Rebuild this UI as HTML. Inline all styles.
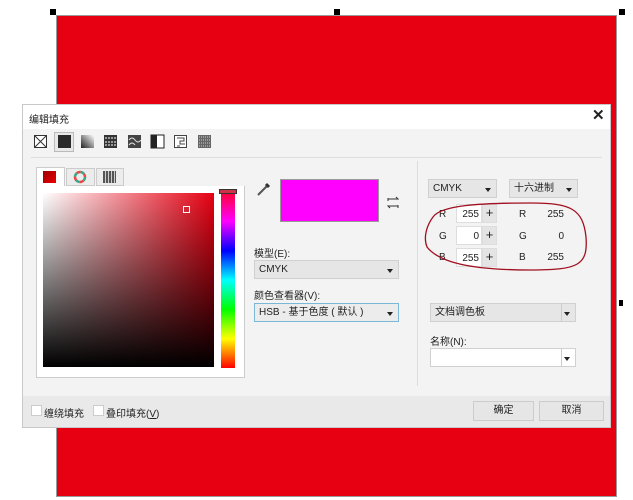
<!DOCTYPE html>
<html><head><meta charset="utf-8"><style>
*{box-sizing:border-box;margin:0;padding:0}
body{width:633px;height:500px;background:#fff;position:relative;overflow:hidden;font-family:"Liberation Sans","Noto Sans CJK SC",sans-serif;font-size:10px;color:#222}
.a{position:absolute}
.h{width:6px;height:6px;background:#000}
.sel{background:#e6e6e6;border:1px solid #d0d0d0;font-size:10px;padding:3px 4px;line-height:11px}
.sel:after{content:"";position:absolute;right:5px;top:8px;border:3px solid transparent;border-top:4px solid #222}
.ic{width:14px;height:14px}
.lbl{font-size:10px}
</style></head><body>
<div class="a" style="left:56px;top:15px;width:561px;height:482px;background:#e60012;border:1px solid #999"></div>
<div class="a h" style="left:50px;top:9px"></div>
<div class="a h" style="left:334px;top:9px"></div>
<div class="a h" style="left:619px;top:9px"></div>
<div class="a h" style="left:619px;top:300px;width:4px"></div>

<div class="a" style="left:22px;top:104px;width:589px;height:324px;background:#f3f3f3;border:1px solid #c8c8c8">
 <div class="a" style="left:0;top:0;width:587px;height:24px;background:#fff"></div>
 <div class="a" style="left:6px;top:6px;font-size:10px">编辑填充</div>
 <div class="a" style="left:569px;top:1px;font-size:15px;font-weight:bold">✕</div>
 <!-- toolbar -->
 <div class="a" style="left:31px;top:27px;width:20px;height:20px;border:1px solid #bbb;background:#e8e8e8"></div>
 <svg class="a" style="left:10px;top:29px" width="190" height="16">
  <rect x="1.5" y="1.5" width="12" height="12" fill="#fff" stroke="#333"/><path d="M1.5 1.5L13.5 13.5M13.5 1.5L1.5 13.5" stroke="#333"/>
  <rect x="25" y="1" width="13" height="13" fill="#2a2a2a"/>
  <defs><linearGradient id="g" x1="0" y1="1" x2="1" y2="0"><stop offset="0" stop-color="#222"/><stop offset="1" stop-color="#fff"/></linearGradient></defs>
  <rect x="48" y="1" width="13" height="13" fill="url(#g)"/>
  <rect x="71" y="1" width="13" height="13" fill="#333"/><path d="M72 4h11M72 8h11M72 11h11" stroke="#fff" stroke-dasharray="2 1"/>
  <rect x="95" y="1" width="13" height="13" fill="#444"/><path d="M96 6q3-4 6 0t6 0M96 11q3-4 6 0" stroke="#ddd" fill="none"/>
  <rect x="118" y="1" width="13" height="13" fill="#fff" stroke="#222"/><rect x="118" y="1" width="6" height="13" fill="#222"/>
  <rect x="141.5" y="1.5" width="12" height="12" fill="#fff" stroke="#444"/><path d="M144 4h7v3h-4v3h5M144 12h3" stroke="#444" fill="none"/>
  <rect x="165" y="1" width="13" height="13" fill="#666"/><path d="M166 3h11M166 6h11M166 9h11M166 12h11" stroke="#ccc" stroke-dasharray="1 1"/>
 </svg>
 <div class="a" style="left:8px;top:52px;width:571px;height:1px;background:#ddd"></div>
 <!-- tabs -->
 <div class="a" style="left:13px;top:62px;width:29px;height:20px;background:#fff;border:1px solid #ccc;border-bottom:none"></div>
 <div class="a" style="left:20px;top:66px;width:13px;height:12px;background:linear-gradient(135deg,#900,#e00)"></div>
 <div class="a" style="left:43px;top:63px;width:29px;height:18px;background:#ececec;border:1px solid #ccc"></div>
 <svg class="a" style="left:50px;top:65px" width="14" height="14"><circle cx="7" cy="7" r="5" fill="none" stroke="#3a8" stroke-width="2.5" stroke-dasharray="4 4"/><circle cx="7" cy="7" r="5" fill="none" stroke="#e44" stroke-width="2.5" stroke-dasharray="4 4" stroke-dashoffset="4"/></svg>
 <div class="a" style="left:73px;top:63px;width:28px;height:18px;background:#ececec;border:1px solid #ccc"></div>
 <div class="a" style="left:80px;top:66px;width:13px;height:12px;background:repeating-linear-gradient(90deg,#555 0 2px,#ccc 2px 3px),#555"></div>
 <div class="a" style="left:13px;top:81px;width:209px;height:192px;background:#fff;border:1px solid #ccc;border-top:none"></div>
 <div class="a" style="left:20px;top:88px;width:171px;height:174px;background:linear-gradient(to bottom,rgba(0,0,0,0),#000),linear-gradient(to right,#fff,#e60012)"></div>
 <div class="a" style="left:160px;top:101px;width:7px;height:7px;border:1px solid #fff"></div>
 <div class="a" style="left:198px;top:87px;width:14px;height:176px;background:linear-gradient(to bottom,#f03,#f0f,#00f,#0ff,#0f0,#ff0,#f00)"></div>
 <div class="a" style="left:196px;top:84px;width:18px;height:5px;border:1px solid #333;background:#c34"></div>
 <!-- middle -->
 <svg class="a" style="left:233px;top:76px" width="16" height="16"><path d="M2 14L11 5" stroke="#555" stroke-width="2"/><path d="M10 3l3 3" stroke="#333" stroke-width="3"/></svg>
 <div class="a" style="left:257px;top:74px;width:99px;height:43px;background:#f0f;border:1px solid #999"></div>
 <svg class="a" style="left:363px;top:90px" width="14" height="16"><path d="M2 4h10l-2-2M12 11H2l2 2M2 3v3M12 10v3" stroke="#333" fill="none"/></svg>
 <div class="a lbl" style="left:231px;top:140px">模型(E):</div>
 <div class="a sel" style="left:231px;top:155px;width:145px;height:19px">CMYK</div>
 <div class="a lbl" style="left:231px;top:182px">颜色查看器(V):</div>
 <div class="a sel" style="left:231px;top:198px;width:145px;height:19px;border-color:#7ab8d8;background:#ececec">HSB - 基于色度 ( 默认 )</div>
 <div class="a" style="left:394px;top:56px;width:1px;height:225px;background:#ddd"></div>
 <!-- right -->
 <div class="a sel" style="left:405px;top:74px;width:69px;height:19px">CMYK</div>
 <div class="a sel" style="left:486px;top:74px;width:69px;height:19px">十六进制</div>
 <div class="a lbl" style="left:416px;top:104px">R</div><div class="a lbl" style="left:416px;top:126px">G</div><div class="a lbl" style="left:416px;top:147px">B</div>
 <div class="a" style="left:433px;top:99px;width:26px;height:19px;background:#fff;border:1px solid #ddd;text-align:right;padding:4px 2px 0 0">255</div>
 <div class="a" style="left:433px;top:121px;width:26px;height:19px;background:#fff;border:1px solid #ddd;text-align:right;padding:4px 2px 0 0">0</div>
 <div class="a" style="left:433px;top:143px;width:26px;height:19px;background:#fff;border:1px solid #ddd;text-align:right;padding:4px 2px 0 0">255</div>
 <div class="a" style="left:459px;top:99px;width:15px;height:19px;background:#e4e4e4;border:1px solid #ddd;text-align:center;font-size:13px;line-height:16px">+</div>
 <div class="a" style="left:459px;top:121px;width:15px;height:19px;background:#e4e4e4;border:1px solid #ddd;text-align:center;font-size:13px;line-height:16px">+</div>
 <div class="a" style="left:459px;top:143px;width:15px;height:19px;background:#e4e4e4;border:1px solid #ddd;text-align:center;font-size:13px;line-height:16px">+</div>
 <div class="a lbl" style="left:496px;top:104px">R</div><div class="a lbl" style="left:496px;top:126px">G</div><div class="a lbl" style="left:496px;top:147px">B</div>
 <div class="a lbl" style="left:520px;top:104px;width:21px;text-align:right">255</div><div class="a lbl" style="left:520px;top:126px;width:21px;text-align:right">0</div><div class="a lbl" style="left:520px;top:147px;width:21px;text-align:right">255</div>
 <svg class="a" style="left:398px;top:92px" width="175" height="86"><path d="M12 20C20 8 60 6 110 6C150 6 162 12 165 40C167 68 158 73 110 73C60 73 20 68 6 50C2 40 6 28 12 20Z" fill="none" stroke="#a01020" stroke-width="1.3"/></svg>
 <div class="a sel" style="left:407px;top:198px;width:146px;height:19px">文档调色板</div>
 <div class="a" style="left:538px;top:198px;width:1px;height:19px;background:#ccc"></div>
 <div class="a lbl" style="left:407px;top:228px">名称(N):</div>
 <div class="a sel" style="left:407px;top:243px;width:146px;height:19px;background:#fff"></div>
 <div class="a" style="left:538px;top:243px;width:1px;height:19px;background:#ccc"></div>
 <!-- bottom -->
 <div class="a" style="left:0;top:291px;width:587px;height:31px;background:#e9e9e9"></div>
 <div class="a" style="left:8px;top:300px;width:11px;height:11px;background:#fff;border:1px solid #ccc"></div>
 <div class="a lbl" style="left:21px;top:300px">缠绕填充</div>
 <div class="a" style="left:70px;top:300px;width:11px;height:11px;background:#fff;border:1px solid #ccc"></div>
 <div class="a lbl" style="left:83px;top:300px">叠印填充(<u>V</u>)</div>
 <div class="a" style="left:450px;top:296px;width:61px;height:20px;background:#e6e6e6;border:1px solid #ccc;text-align:center;line-height:18px">确定</div>
 <div class="a" style="left:516px;top:296px;width:65px;height:20px;background:#e6e6e6;border:1px solid #ccc;text-align:center;line-height:18px">取消</div>
</div>
</body></html>
